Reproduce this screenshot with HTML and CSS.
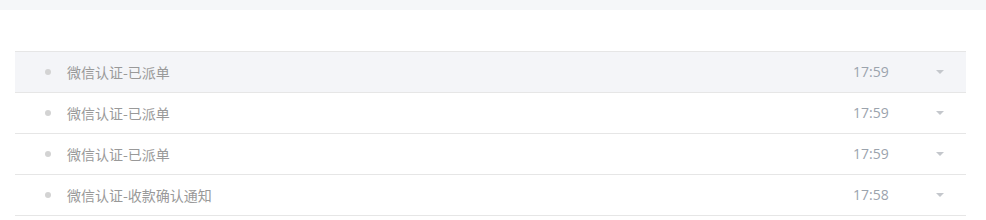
FILE: index.html
```html
<!DOCTYPE html>
<html lang="zh">
<head>
<meta charset="utf-8">
<link rel="stylesheet" href="styles.css">
</head>
<body>
<div class="topband"></div>
<div class="wrap">
  <ul class="list">
    <li class="row active"><span class="dot"></span><span class="title">微信认证-已派单</span><span class="time">17:59</span><span class="caret"></span></li>
    <li class="row"><span class="dot"></span><span class="title">微信认证-已派单</span><span class="time">17:59</span><span class="caret"></span></li>
    <li class="row"><span class="dot"></span><span class="title">微信认证-已派单</span><span class="time">17:59</span><span class="caret"></span></li>
    <li class="row"><span class="dot"></span><span class="title">微信认证-收款确认通知</span><span class="time">17:58</span><span class="caret"></span></li>
  </ul>
</div>
</body>
</html>
```
FILE: styles.css
```css
html, body { margin: 0; padding: 0; background: #fff; }
body { font-family: "Open Sans", "Noto Sans CJK SC", sans-serif; }
.topband { height: 10px; background: #f5f7f9; }
.wrap { padding: 41px 20px 0 15px; }
.list { list-style: none; margin: 0; padding: 0; border-top: 1px solid #e6e6e6; }
.row { display: flex; align-items: center; height: 40px; border-bottom: 1px solid #e6e6e6; padding: 0 22px 0 30px; }
.row.active { background: #f4f5f8; }
.dot { width: 6px; height: 6px; border-radius: 50%; background: #d3d3d3; flex: none; }
.title { margin-left: 16px; flex: 1; font-size: 14px; line-height: 20px; color: #999999; font-family: "Noto Sans CJK SC", sans-serif; }
.time { font-size: 14px; line-height: 20px; color: #9ba3ad; width: 36px; }
.caret { margin-left: 47px; width: 0; height: 0; border-left: 4px solid transparent; border-right: 4px solid transparent; border-top: 4px solid #c4c7cc; }
```
